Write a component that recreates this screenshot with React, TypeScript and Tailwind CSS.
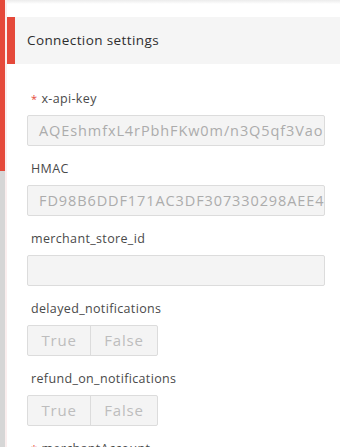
import React from "react";

const font = { fontFamily: '"Open Sans", "Liberation Sans", sans-serif' };

function Label({ text, required }: { text: string; required?: boolean }) {
  return (
    <div className="h-4 mb-2 pl-[4px] flex items-center text-[12.5px] leading-4 text-[#4a4a4a] tracking-[0.35px]">
      {required && <span className="text-[#e5493a] text-[11px] mr-[4px]">*</span>}
      <span>{text}</span>
    </div>
  );
}

function TextInput({ value }: { value?: string }) {
  return (
    <div className="h-[31px] w-[298px] rounded-[2px] border border-[#dcdcdc] bg-[#f4f4f4] pl-[11px] flex items-center overflow-hidden">
      <span className="whitespace-nowrap text-[14.5px] text-[#acacac] tracking-[0.9px]">{value}</span>
    </div>
  );
}

function Toggle() {
  return (
    <div className="flex h-[31px] w-[131px] rounded-[2px] border border-[#dcdcdc] bg-[#f4f4f4] text-[15px] text-[#bdbdbd] tracking-[0.8px]">
      <div className="w-[63px] flex items-center justify-center border-r border-[#dcdcdc]">True</div>
      <div className="flex-1 flex items-center justify-center">False</div>
    </div>
  );
}

export default function App() {
  const fields = [
    { label: "x-api-key", required: true, value: "AQEshmfxL4rPbhFKw0m/n3Q5qf3Vao!" },
    { label: "HMAC", value: "FD98B6DDF171AC3DF307330298AEE44" },
    { label: "merchant_store_id", value: "" },
  ];

  return (
    <div className="flex h-[447px] w-[340px] overflow-hidden bg-white" style={font}>
      {/* scroll indicator */}
      <div className="flex w-[7px] shrink-0">
        <div className="flex w-[5px] flex-col">
          <div className="h-[171px] shrink-0 bg-[#e5493a]" />
          <div className="flex-1 bg-[#d6d6d6]" />
        </div>
        <div className="w-[2px] bg-[#faeeee]" />
      </div>

      <div className="flex-1 flex flex-col">
        <div className="h-[4px] shrink-0 bg-gradient-to-b from-[#ececec] to-white" />
        <div className="mt-[13px] h-[47px] shrink-0 flex items-center border-l-8 border-[#e5493a] bg-[#f5f5f5] pl-[12px]">
          <span className="text-[13.5px] text-[#2e2e2e] tracking-[0.4px]">Connection settings</span>
        </div>

        <div className="shrink-0 pl-[20px] pt-[27px] flex flex-col gap-[15px]">
          {fields.map((f) => (
            <div key={f.label} className="shrink-0">
              <Label text={f.label} required={f.required} />
              <TextInput value={f.value} />
            </div>
          ))}
          <div className="shrink-0">
            <Label text="delayed_notifications" />
            <Toggle />
          </div>
          <div className="shrink-0">
            <Label text="refund_on_notifications" />
            <Toggle />
          </div>
          <div className="shrink-0">
            <Label text="merchantAccount" required />
          </div>
        </div>
      </div>
    </div>
  );
}
